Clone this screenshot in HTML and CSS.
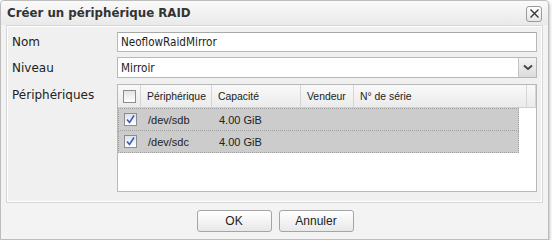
FILE: index.html
```html
<!DOCTYPE html>
<html lang="fr">
<head>
    <meta charset="UTF-8" />
    <title>Créer un périphérique RAID</title>
    <link rel="stylesheet" href="styles.css">
</head>
<body>
    <div class="window">
        <!-- Title bar -->
        <div class="titlebar">
            <span class="title">Créer un périphérique RAID</span>
            <span class="close">
                <svg width="11" height="11" viewBox="0 0 11 11"><path d="M1.5 1.5 L9.5 9.5 M9.5 1.5 L1.5 9.5" stroke="#333" stroke-width="1.3" fill="none"/></svg>
            </span>
        </div>

        <!-- Form -->
        <div class="panel">
            <div class="row">
                <label class="label">Nom</label>
                <input class="field text" value="NeoflowRaidMirror" />
            </div>
            <div class="row">
                <label class="label">Niveau</label>
                <div class="field select">
                    <span class="select-value">Mirroir</span>
                    <span class="select-btn">
                        <svg width="10" height="7" viewBox="0 0 10 7"><path d="M1 1.5 L5 5 L9 1.5" stroke="#444" stroke-width="2" fill="none"/></svg>
                    </span>
                </div>
            </div>
            <div class="row">
                <label class="label label-top">Périphériques</label>
                <div class="field grid">
                    <div class="grid-head">
                        <div class="cell col-check"><span class="check"></span></div>
                        <div class="cell col-dev">Périphérique</div>
                        <div class="cell col-cap">Capacité</div>
                        <div class="cell col-vendor">Vendeur</div>
                        <div class="cell col-serial">N° de série</div>
                        <div class="cell col-spacer"></div>
                    </div>
                    <div class="grid-body">
                        <div class="grid-row">
                            <div class="cell col-check"><span class="check checked"><svg width="9" height="9" viewBox="0 0 9 9"><path d="M1 4.5 L3.5 7.5 L8 0.5" stroke="#3a5fb8" stroke-width="1.6" fill="none"/></svg></span></div>
                            <div class="cell col-dev">/dev/sdb</div>
                            <div class="cell col-cap">4.00 GiB</div>
                            <div class="cell col-vendor"></div>
                            <div class="cell col-rest"></div>
                        </div>
                        <div class="grid-row">
                            <div class="cell col-check"><span class="check checked"><svg width="9" height="9" viewBox="0 0 9 9"><path d="M1 4.5 L3.5 7.5 L8 0.5" stroke="#3a5fb8" stroke-width="1.6" fill="none"/></svg></span></div>
                            <div class="cell col-dev">/dev/sdc</div>
                            <div class="cell col-cap">4.00 GiB</div>
                            <div class="cell col-vendor"></div>
                            <div class="cell col-rest"></div>
                        </div>
                    </div>
                </div>
            </div>
        </div>

        <!-- Buttons -->
        <div class="footer">
            <button class="btn">OK</button>
            <button class="btn">Annuler</button>
        </div>
    </div>
</body>
</html>
```

FILE: styles.css
```css
body {
    margin: 0;
    background: #ffffff;
    font-family: "DejaVu Sans", Tahoma, sans-serif;
    font-size: 12px;
    color: #222;
}

.window {
    width: 549px;
    height: 240px;
    border: 1px solid #bdbdbd;
    border-radius: 4px 4px 0 0;
    background: #f3f3f3;
    box-shadow: 1px 2px 3px rgba(0, 0, 0, 0.25);
    display: flex;
    flex-direction: column;
    box-sizing: border-box;
}

.titlebar {
    height: 24px;
    display: flex;
    align-items: center;
    justify-content: space-between;
    padding: 0 6px 0 6px;
    background: linear-gradient(#fafafa, #e9e9e9);
    border-radius: 4px 4px 0 0;
}

.title {
    font-weight: bold;
    font-size: 11.8px;
    color: #333;
}

.close {
    width: 14px;
    height: 14px;
    border: 1px solid #9a9a9a;
    border-radius: 3px;
    background: linear-gradient(#fdfdfd, #e6e6e6);
    display: flex;
    align-items: center;
    justify-content: center;
    margin-top: 1px;
}

.panel {
    margin: 0 5px;
    border: 1px solid #d6d6d6;
    box-shadow: inset 0 0 0 1px #ffffff;
    background: #f0f0f0;
    padding: 6px 5px 10px 5px;
    display: flex;
    flex-direction: column;
    gap: 5px;
}

.row {
    display: flex;
    align-items: center;
}

.row:last-child {
    align-items: flex-start;
    margin-top: 1px;
}

.label {
    width: 105px;
    flex: none;
    font-size: 12px;
    color: #222;
}

.label-top {
    padding-top: 4px;
}

.field {
    width: 421px;
    box-sizing: border-box;
    border: 1px solid #b8b8b8;
    background: #fff;
    font-family: "DejaVu Sans Condensed", "Liberation Sans", sans-serif;
    font-size: 11.6px;
    color: #222;
}

.text {
    height: 20px;
    padding: 0 3px;
    margin: 0;
    border-top-color: #a8a8a8;
}

.select {
    height: 21px;
    display: flex;
    align-items: center;
    justify-content: space-between;
}

.select-value {
    padding-left: 3px;
}

.select-btn {
    width: 17px;
    height: 19px;
    border-left: 1px solid #c4c4c4;
    background: linear-gradient(#f4f4f4, #dcdcdc);
    display: flex;
    align-items: center;
    justify-content: center;
}

.grid {
    height: 108px;
    font-family: "Liberation Sans", Arial, sans-serif;
    font-size: 11px;
}

.grid-head {
    display: flex;
    height: 22px;
    font-size: 10.4px;
    background: linear-gradient(#f9f9f9, #ebebeb);
    border-bottom: 1px solid #d0d0d0;
}

.grid-head .cell {
    border-right: 1px solid #d6d6d6;
}

.cell {
    box-sizing: border-box;
    display: flex;
    align-items: center;
    padding-left: 6px;
}

.col-check {
    width: 23px;
    justify-content: center;
    padding-left: 0;
}

.col-dev {
    width: 71px;
}

.col-cap {
    width: 89px;
}

.col-vendor {
    width: 53px;
}

.col-serial {
    width: 173px;
}

.col-spacer {
    flex: 1;
}

.col-rest {
    flex: 1;
}

.grid-body {
    width: 401px;
}

.grid-row {
    display: flex;
    height: 22px;
    background: #cccccc;
    border: 1px dotted #a0a0a0;
    border-top: none;
    box-sizing: border-box;
}

.grid-row:first-child {
    border-top: 1px dotted #a0a0a0;
    height: 23px;
}

.check {
    width: 11px;
    height: 11px;
    border: 1px solid #8c8c8c;
    background: linear-gradient(#e4e4e4, #ffffff);
    display: flex;
    align-items: center;
    justify-content: center;
}

.checked {
    background: linear-gradient(#dde3ee, #ffffff);
}

.footer {
    display: flex;
    justify-content: center;
    gap: 7px;
    padding-top: 7px;
    padding-left: 1px;
}

.btn {
    width: 75px;
    height: 22px;
    border: 1px solid #a5a5a5;
    border-radius: 3px;
    background: linear-gradient(#ffffff, #e8e8e8);
    font-family: "Liberation Sans", Arial, sans-serif;
    font-size: 12px;
    color: #222;
}
```
